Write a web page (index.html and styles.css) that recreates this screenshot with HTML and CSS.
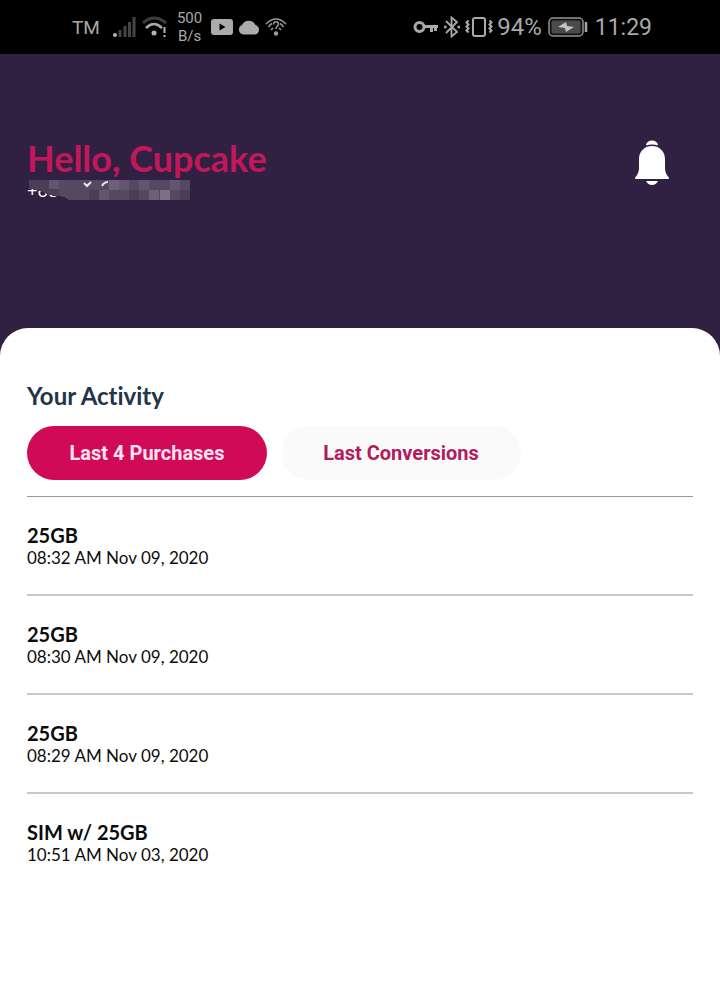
FILE: index.html
```html
<!DOCTYPE html>
<html lang="en">
<head>
    <meta charset="UTF-8">
    <meta name="viewport" content="width=device-width, initial-scale=1">
    <title>Your Activity</title>
    <link rel="stylesheet" href="styles.css">
</head>
<body>

    <div class="status-bar">
        <div class="status-group status-left">
            <span class="carrier">TM</span>
            <!-- signal -->
            <svg width="24" height="22" viewBox="0 0 24 22">
                <circle cx="2" cy="19" r="2" fill="#b5b5b5"/>
                <path d="M7 21v-7M12 21V10M16.500 21V6M21 21V1" stroke="#444" stroke-width="3" fill="none"/>
            </svg>
            <!-- wifi -->
            <svg width="26" height="22" viewBox="0 0 26 22">
                <path d="M1 7Q12 -3 24 7" stroke="#3d3d3d" stroke-width="3" fill="none"/>
                <path d="M4 12Q12 4 20 12" stroke="#aaa" stroke-width="2.500" fill="none"/>
                <circle cx="12" cy="17" r="2.500" fill="#b5b5b5"/>
                <path d="M22.500 11v6M22.500 19v2" stroke="#b5b5b5" stroke-width="2"/>
            </svg>
            <span class="speed">500<br>B/s</span>
            <!-- video -->
            <svg width="22" height="16" viewBox="0 0 22 16">
                <rect width="22" height="16" rx="3" fill="#ababab"/>
                <path d="M8.500 4.500v7l6-3.500z" fill="#000"/>
            </svg>
            <!-- cloud -->
            <svg width="22" height="16" viewBox="0 0 22 16">
                <path d="M5 15.500a5 5 0 0 1-1-9.500A7.500 7.500 0 0 1 17.500 6a4.900 4.900 0 0 1-.5 9.500z" fill="#ababab"/>
            </svg>
            <!-- wifi assistant -->
            <svg width="22" height="20" viewBox="0 0 22 20" fill="none" stroke="#999" stroke-width="1.500">
                <path d="M1 7Q11 -3 21 7M3.500 10Q5 7.500 7 6.500M18.500 10Q17 7.500 15 6.500M6 13l2-2M16 13l-2-2"/>
                <path d="M8.500 7.500c0-4 5-3.500 5-.5 0 2.500-2.500 2-2.500 5"/>
                <circle cx="11" cy="16.500" r="1.500" fill="#999"/>
            </svg>
        </div>
        <div class="status-group status-right">
            <!-- vpn key -->
            <svg width="26" height="14" viewBox="0 0 26 14" fill="none" stroke="#aaa" stroke-width="3">
                <circle cx="6.500" cy="7" r="4.500"/>
                <path d="M11 6.500h14M18.500 7v5M22.500 7v4"/>
            </svg>
            <!-- bluetooth -->
            <svg width="18" height="22" viewBox="0 0 18 22" fill="none" stroke="#aaa" stroke-width="1.800">
                <path d="M3 5l11 11-5.500 4.500v-19L14 6 3 17"/>
                <path d="M1 11h2.500M14.500 11H17" stroke-width="2.500"/>
            </svg>
            <!-- vibrate -->
            <svg width="28" height="22" viewBox="0 0 28 22" fill="none" stroke="#aaa" stroke-width="2">
                <rect x="8" y="2" width="12" height="18" rx="2"/>
                <path d="M3.500 4.500l-2 2 2 2-2 2 2 2-2 2 2 2M24.500 4.500l2 2-2 2 2 2-2 2 2 2-2 2"/>
            </svg>
            <span class="battery-text">94%</span>
            <!-- battery -->
            <svg class="battery" width="40" height="20" viewBox="0 0 40 20">
                <rect x="1" y="1" width="34" height="18" rx="4" fill="#111" stroke="#929292" stroke-width="1.500"/>
                <rect x="3.500" y="3.500" width="29" height="13" rx="2" fill="#4b4b4b"/>
                <path d="M10 10l8-5 1 4 7 1-8 5-1-4z" fill="#c4c4c4"/>
                <path d="M38 5v10" stroke="#a5a5a5" stroke-width="2.500"/>
            </svg>
            <span class="clock">11:29</span>
        </div>
    </div>

    <header class="hero">
        <div>
            <h1>Hello, Cupcake</h1>
            <div class="phone">
                <span>+63</span>
                <!-- hidden digits -->
                <svg class="mask" width="163" height="20" viewBox="0 0 163 20" shape-rendering="crispEdges">
                    <path d="M2 0h61v20H46q-10-4-18-4-8-1-14-5-6-2-12-2z" fill="#4a3d58"/>
                    <path d="M32 0h131v20H42q-5-4-10-5z" fill="#554862"/>
                    <path d="M22 0h10v9H22zM72 10h10v10H72zM92 0h10v10H92zM112 0h10v10h-10zM143 0h10v10h-10z" fill="#625570"/>
                    <path d="M62 10h10v10H62zM102 10h10v10h-10zM153 10h10v10h-10z" fill="#4a3d58"/>
                    <path d="M82 0h10v10H82zM122 10h10v10h-10z" fill="#6d617a"/>
                    <path d="M133 10h10v10h-10z" fill="#7b7087"/>
                    <path d="M57 3l3 3 4-4M75 6q2-4 6-4" fill="none" stroke="#e8e4ec" stroke-width="2" shape-rendering="auto"/>
                </svg>
            </div>
        </div>
        <button class="bell" type="button" aria-label="Notifications">
            <svg width="36" height="46" viewBox="0 0 36 46" fill="#fff">
                <path d="M12 5.500a6 5 0 0 1 12 0q-6-2-12 0z"/>
                <path d="M18 6c8 0 13 6 13 13v8c0 5 1 7 3.500 10 1 1.500.5 2-1 2h-31c-1.500 0-2-.5-1-2C4 34 5 32 5 27v-8C5 12 10 6 18 6z"/>
                <path d="M12 41h12q-2 4-6 4t-6-4z"/>
            </svg>
        </button>
    </header>

    <main class="sheet">
        <h2>Your Activity</h2>
        <div class="tabs">
            <button class="tab active" type="button">Last 4 Purchases</button>
            <button class="tab" type="button">Last Conversions</button>
        </div>
        <ul class="activity">
            <li>
                <strong>25GB</strong>
                <span>08:32 AM Nov 09, 2020</span>
            </li>
            <li>
                <strong>25GB</strong>
                <span>08:30 AM Nov 09, 2020</span>
            </li>
            <li>
                <strong>25GB</strong>
                <span>08:29 AM Nov 09, 2020</span>
            </li>
            <li>
                <strong>SIM w/ 25GB</strong>
                <span>10:51 AM Nov 03, 2020</span>
            </li>
        </ul>
    </main>

</body>
</html>
```
FILE: styles.css
```css
* {
    box-sizing: border-box;
}
body {
    margin: 0;
    min-height: 100vh;
    display: flex;
    flex-direction: column;
    font-family: Lato, sans-serif;
    font-variant-ligatures: none;
    background-color: #302042;
    color: #0c0c0c;
}
h1, h2 {
    margin: 0;
}
button {
    border: none;
    padding: 0;
    cursor: pointer;
}
.status-bar {
    display: flex;
    justify-content: space-between;
    height: 54px;
    padding: 0 68px 0 72px;
    background-color: #000;
    color: #a8a8a8;
    font-family: Roboto, sans-serif;
}
.status-group {
    display: flex;
    align-items: center;
}
.status-left {
    gap: 5px;
}
.carrier {
    margin-right: 8px;
    font-size: 19px;
}
.speed {
    margin: 0 4px;
    font-size: 15px;
    line-height: 18px;
    text-align: center;
}
.status-right {
    gap: 4px;
    font-size: 24px;
}
.battery {
    margin: 0 3px 0 2px;
}
.clock {
    font-size: 23px;
}
.hero {
    display: flex;
    justify-content: space-between;
    align-items: flex-start;
    height: 274px;
    padding: 84px 50px 0 27px;
    color: #fff;
}
h1 {
    color: #c2185b;
    font-size: 36px;
    line-height: 40px;
}
.phone {
    position: relative;
    padding-top: 2px;
    font-size: 18px;
    line-height: 20px;
}
.mask {
    position: absolute;
    left: 0;
    top: 2px;
}
.bell {
    margin-top: 2px;
    background: none;
}
.bell svg {
    display: block;
}
.sheet {
    flex: 1;
    padding: 54px 27px;
    background-color: #fff;
    border-radius: 28px 28px 0 0;
}
h2 {
    color: #22344a;
    font-size: 24px;
    line-height: 28px;
}
.tabs {
    display: flex;
    gap: 14px;
    padding: 16px 0;
}
.tab {
    width: 240px;
    height: 54px;
    border-radius: 27px;
    background-color: #fafafa;
    color: #b01c5e;
    font-family: Roboto, sans-serif;
    font-size: 20px;
    font-weight: 700;
}
.tab.active {
    background-color: #d10a57;
    color: #ffe3f0;
}
.activity {
    margin: 0;
    padding: 0;
    list-style: none;
}
.activity li {
    display: flex;
    flex-direction: column;
    padding: 27px 0 25px;
    border-top: 2px solid #c8c8c8;
}
.activity li:first-child {
    border-top: 1px solid #999;
}
.activity strong {
    font-size: 20px;
    line-height: 22px;
}
.activity span {
    font-size: 17px;
    line-height: 23px;
}
```
